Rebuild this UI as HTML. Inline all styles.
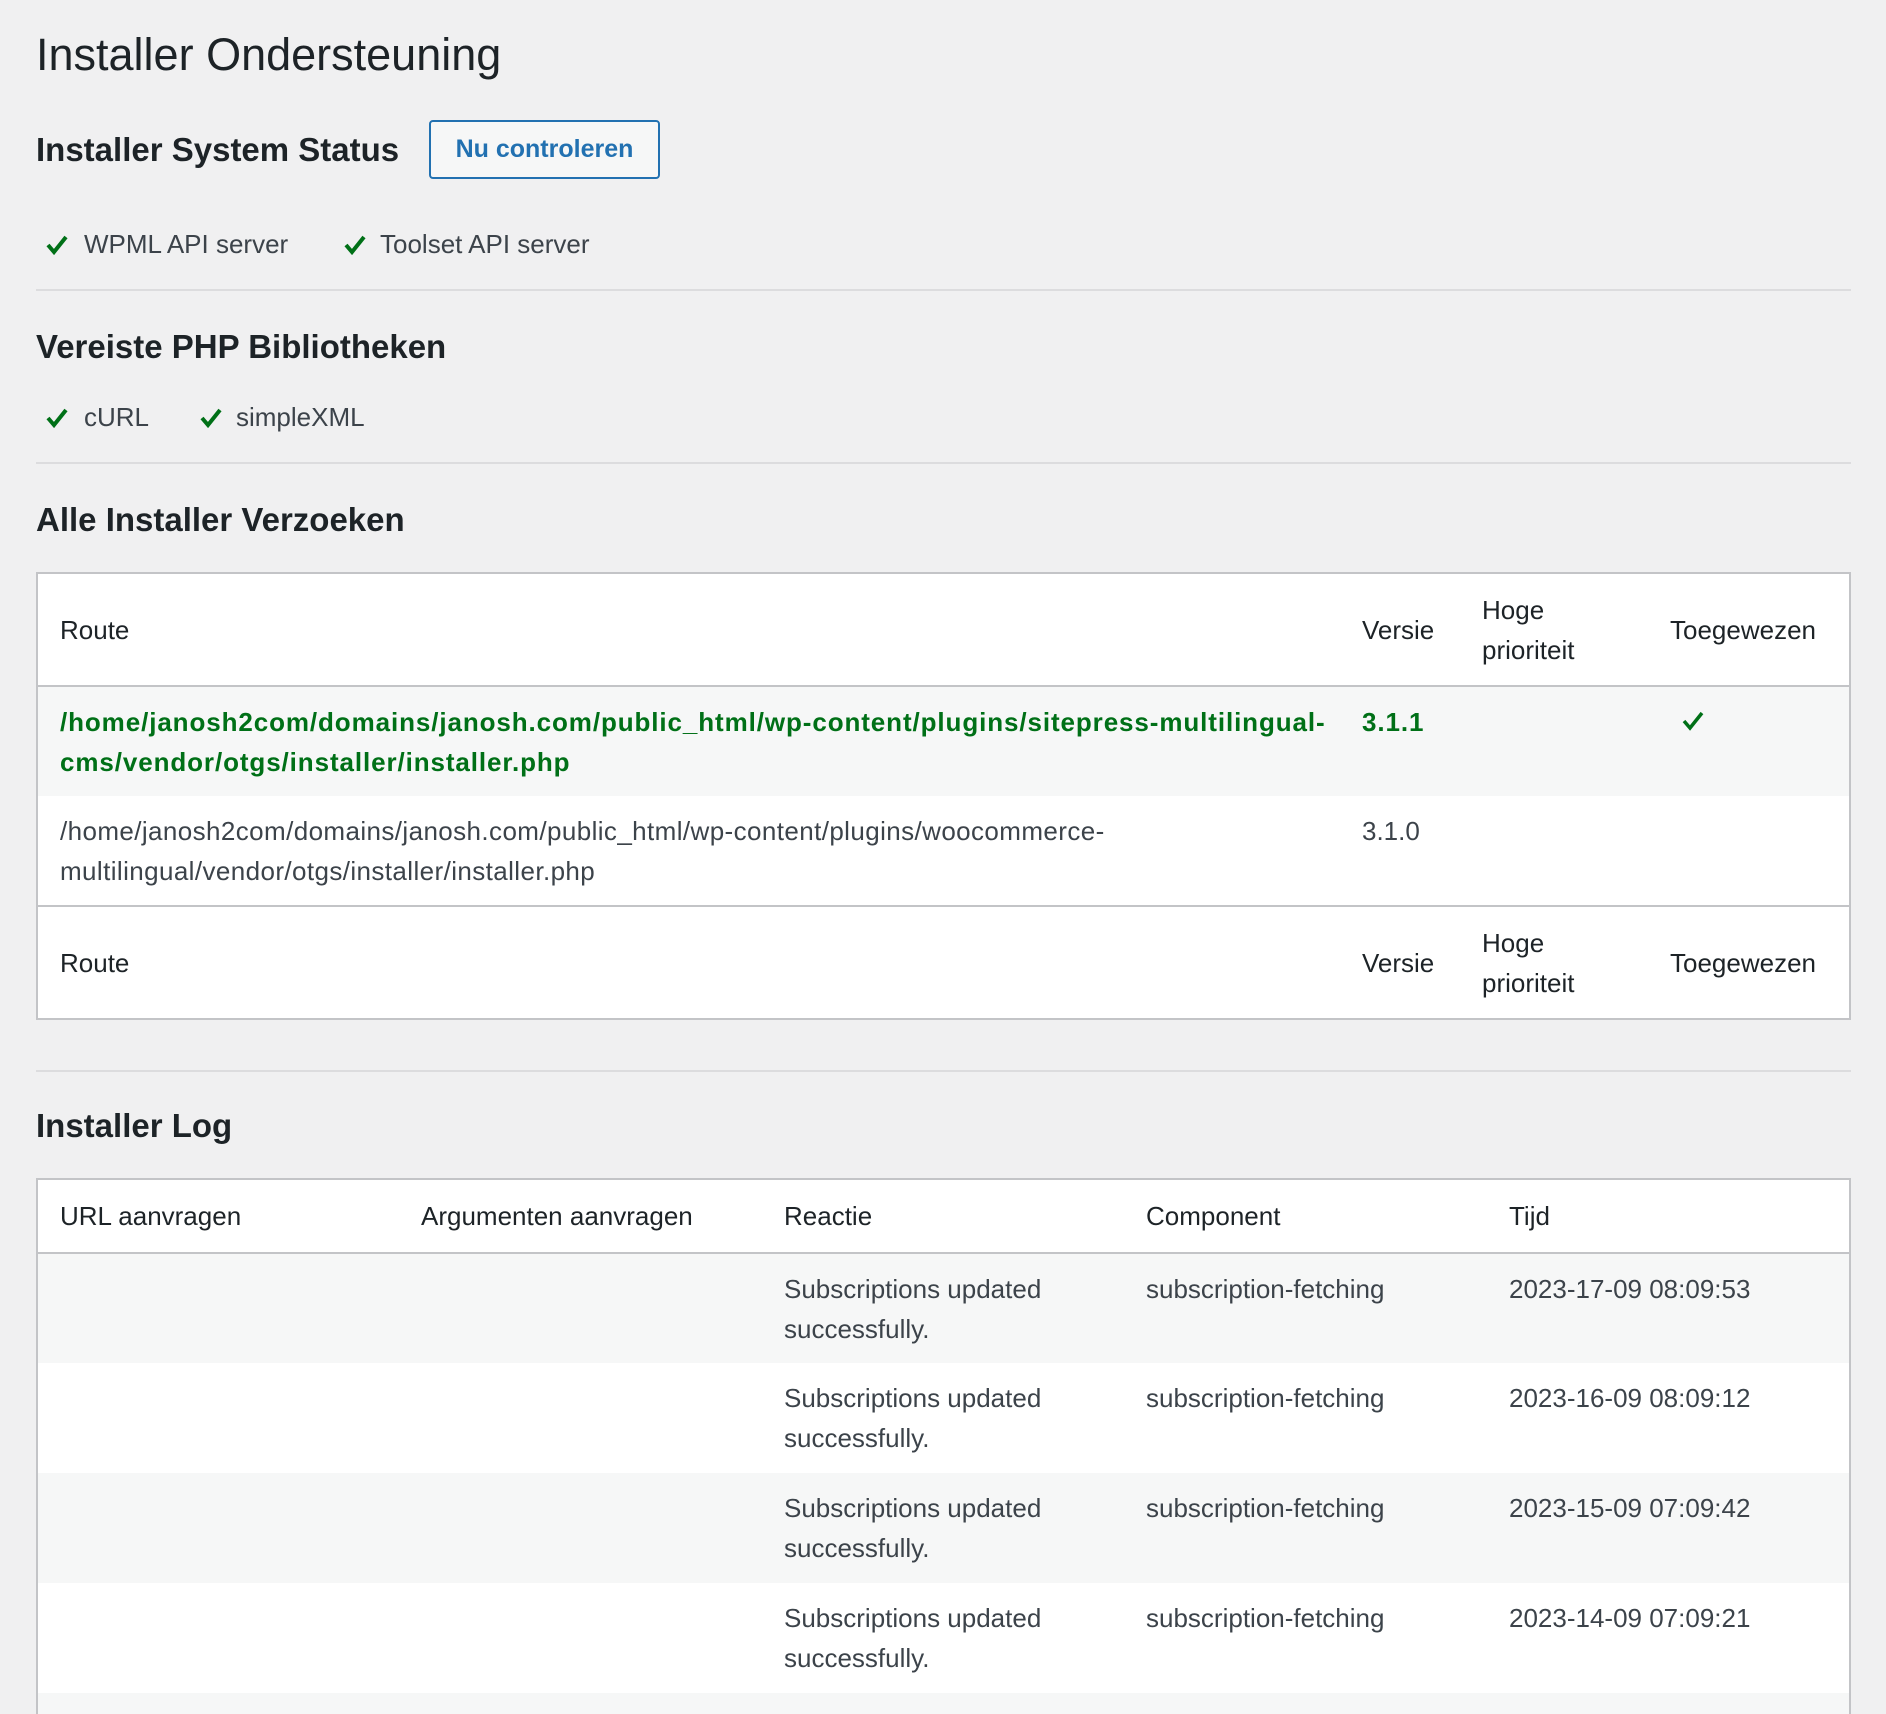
<!DOCTYPE html>
<html><head><meta charset="utf-8"><style>
*{box-sizing:border-box;margin:0;padding:0}
html,body{width:1886px;height:1714px;overflow:hidden;background:#f0f0f1;font-family:"Liberation Sans",sans-serif;color:#3c434a}
#wrap{position:relative;width:1886px;height:1714px;overflow:hidden}
h1{position:absolute;left:36px;top:29px;font-size:45px;font-weight:400;color:#1d2327}
h2{position:absolute;left:36px;font-size:33px;font-weight:700;color:#1d2327;line-height:40px}
.btn{position:absolute;left:429px;top:120px;width:231px;height:59px;border:2px solid #2271b1;border-radius:4px;background:#f6f7f7;color:#2271b1;font-weight:700;font-size:25px;line-height:55px;text-align:center}
.hr{position:absolute;left:36px;width:1815px;height:2px;background:#dcdcde}
.it{position:absolute;font-size:26px;line-height:30px;white-space:nowrap}
svg.ck{position:absolute}
table{position:absolute;left:36px;width:1815px;border:2px solid #c3c4c7;border-collapse:collapse;table-layout:fixed;background:#fff;font-size:26px;line-height:40px}
td{padding:0;vertical-align:middle;white-space:nowrap}
td:first-child{padding-left:22px}
thead td,tfoot td{color:#1d2327}
.g{background:#f6f7f7}
.row td{vertical-align:top;padding-top:15px}
.grn{color:#007017;font-weight:700;letter-spacing:0.9px}
</style></head><body><div id="wrap">
<h1>Installer Ondersteuning</h1>
<h2 style="top:130px">Installer System Status</h2>
<div class="btn">Nu controleren</div>
<svg class="ck" style="left:46px;top:235px" width="22" height="20" viewBox="0 0 22 20"><path d="M2 10 L8 17 L20 2" fill="none" stroke="#007017" stroke-width="4"/></svg>
<div class="it" style="left:84px;top:229px">WPML API server</div>
<svg class="ck" style="left:344px;top:235px" width="22" height="20" viewBox="0 0 22 20"><path d="M2 10 L8 17 L20 2" fill="none" stroke="#007017" stroke-width="4"/></svg>
<div class="it" style="left:380px;top:229px">Toolset API server</div>
<div class="hr" style="top:289px"></div>
<h2 style="top:327px">Vereiste PHP Bibliotheken</h2>
<svg class="ck" style="left:46px;top:408px" width="22" height="20" viewBox="0 0 22 20"><path d="M2 10 L8 17 L20 2" fill="none" stroke="#007017" stroke-width="4"/></svg>
<div class="it" style="left:84px;top:402px">cURL</div>
<svg class="ck" style="left:200px;top:408px" width="22" height="20" viewBox="0 0 22 20"><path d="M2 10 L8 17 L20 2" fill="none" stroke="#007017" stroke-width="4"/></svg>
<div class="it" style="left:236px;top:402px">simpleXML</div>
<div class="hr" style="top:462px"></div>
<h2 style="top:500px">Alle Installer Verzoeken</h2>
<table style="top:572px">
<colgroup><col style="width:1325px"><col style="width:120px"><col style="width:188px"><col></colgroup>
<thead><tr style="height:113px;border-bottom:2px solid #c3c4c7"><td>Route</td><td>Versie</td><td>Hoge<br>prioriteit</td><td>Toegewezen</td></tr></thead>
<tbody>
<tr class="row g" style="height:110px"><td class="grn">/home/janosh2com/domains/janosh.com/public_html/wp-content/plugins/sitepress-multilingual-<br>cms/vendor/otgs/installer/installer.php</td><td class="grn">3.1.1</td><td></td><td style="padding-left:12px"><svg width="22" height="20" viewBox="0 0 22 20" style="margin-top:9px"><path d="M2 10 L8 17 L20 2" fill="none" stroke="#007017" stroke-width="3.5"/></svg></td></tr>
<tr class="row" style="height:110px"><td style="letter-spacing:0.4px">/home/janosh2com/domains/janosh.com/public_html/wp-content/plugins/woocommerce-<br>multilingual/vendor/otgs/installer/installer.php</td><td>3.1.0</td><td></td><td></td></tr>
</tbody>
<tfoot><tr style="height:113px;border-top:2px solid #c3c4c7"><td>Route</td><td>Versie</td><td>Hoge<br>prioriteit</td><td>Toegewezen</td></tr></tfoot>
</table>
<div class="hr" style="top:1070px"></div>
<h2 style="top:1106px">Installer Log</h2>
<table style="top:1178px">
<colgroup><col style="width:384px"><col style="width:363px"><col style="width:362px"><col style="width:363px"><col></colgroup>
<thead><tr style="height:74px;border-bottom:2px solid #c3c4c7"><td>URL aanvragen</td><td>Argumenten aanvragen</td><td>Reactie</td><td>Component</td><td>Tijd</td></tr></thead>
<tbody>
<tr class="row g" style="height:110px"><td></td><td></td><td>Subscriptions updated<br>successfully.</td><td>subscription-fetching</td><td>2023-17-09 08:09:53</td></tr>
<tr class="row" style="height:110px"><td></td><td></td><td>Subscriptions updated<br>successfully.</td><td>subscription-fetching</td><td>2023-16-09 08:09:12</td></tr>
<tr class="row g" style="height:110px"><td></td><td></td><td>Subscriptions updated<br>successfully.</td><td>subscription-fetching</td><td>2023-15-09 07:09:42</td></tr>
<tr class="row" style="height:110px"><td></td><td></td><td>Subscriptions updated<br>successfully.</td><td>subscription-fetching</td><td>2023-14-09 07:09:21</td></tr>
<tr class="row g" style="height:110px"><td></td><td></td><td>Subscriptions updated<br>successfully.</td><td>subscription-fetching</td><td>2023-13-09 07:09:10</td></tr>
</tbody>
</table>
</div></body></html>
